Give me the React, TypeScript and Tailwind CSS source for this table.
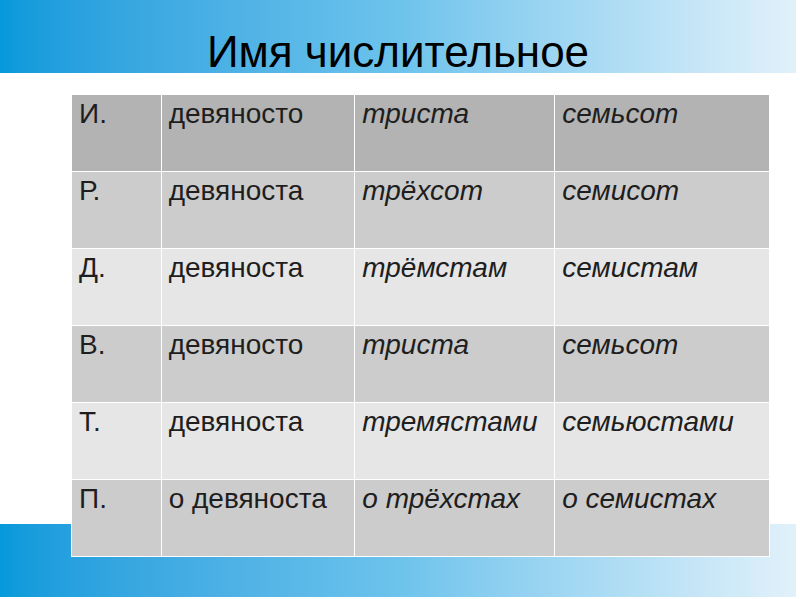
const rows: [string, string, string, string][] = [
  ["И.", "девяносто", "триста", "семьсот"],
  ["Р.", "девяноста", "трёхсот", "семисот"],
  ["Д.", "девяноста", "трёмстам", "семистам"],
  ["В.", "девяносто", "триста", "семьсот"],
  ["Т.", "девяноста", "тремястами", "семьюстами"],
  ["П.", "о девяноста", "о трёхстах", "о семистах"],
];

const rowBg = [
  "bg-[#b3b3b3]",
  "bg-[#cccccc]",
  "bg-[#e6e6e6]",
  "bg-[#cccccc]",
  "bg-[#e6e6e6]",
  "bg-[#cccccc]",
];

const cellBase =
  "border border-white px-[7px] pt-[4px] align-top text-[28px] leading-[30px] text-[#1e1e1e]";

export default function App() {
  return (
    <div className="relative h-[599px] w-[800px] overflow-hidden bg-white font-['Liberation_Sans',Arial,sans-serif]">
      {/* top band */}
      <div className="flex h-[73px] w-[796px] items-end justify-center bg-gradient-to-r from-[#0599db] via-[#6cc3ec] to-[#e1f1fa]">
        <h1 className="mb-[-1px] text-[44px] leading-[44px] text-black">Имя числительное</h1>
      </div>

      {/* bottom band */}
      <div className="absolute left-0 top-[524px] h-[73px] w-[796px] bg-gradient-to-r from-[#0599db] via-[#6cc3ec] to-[#e1f1fa]" />

      {/* table */}
      <table className="absolute left-[71px] top-[94px] w-[699px] border-collapse">
        <colgroup>
          <col className="w-[90px]" />
          <col className="w-[194px]" />
          <col className="w-[200px]" />
          <col className="w-[215px]" />
        </colgroup>
        <tbody>
          {rows.map((r, i) => (
            <tr key={i} className={`h-[77px] ${rowBg[i]}`}>
              <td className={cellBase}>{r[0]}</td>
              <td className={cellBase}>{r[1]}</td>
              <td className={`${cellBase} italic`}>{r[2]}</td>
              <td className={`${cellBase} italic`}>{r[3]}</td>
            </tr>
          ))}
        </tbody>
      </table>
    </div>
  );
}
